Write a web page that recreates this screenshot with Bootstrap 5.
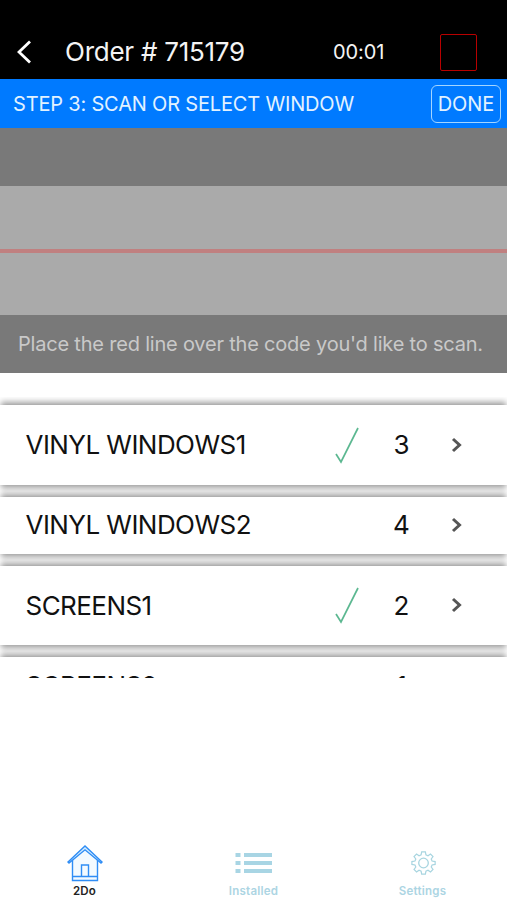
<!DOCTYPE html>
<html lang="en">
<head>
<meta charset="utf-8">
<meta name="viewport" content="width=device-width, initial-scale=1">
<title>Order # 715179</title>
<link href="https://cdn.jsdelivr.net/npm/bootstrap@5.3.0/dist/css/bootstrap.min.css" rel="stylesheet">
<style>
body{font-family:Inter,"Liberation Sans",sans-serif;height:900px;color:#111;background:#fff;line-height:1.2}
.topbar{height:79px;padding:24px 30px 0 17px;background:#000;color:#f4f4f4}
.title{font-size:26px;margin-left:33px;width:268px;letter-spacing:-.25px}
.timer{font-size:20px;width:107px;letter-spacing:-.1px}
.stop{width:37px;height:37px;border:1.5px solid #b80000;border-radius:2px;margin-top:1px}
.step{height:49px;background:#007aff;color:#e2f2ff;font-size:20px;padding:0 6px 0 13px;letter-spacing:-.18px}
.done{height:38px;width:70px;border:1.5px solid #a4d5ff;border-radius:6px;color:#e2f2ff;font-size:20px;letter-spacing:-.1px}
.shade{background:#797979;height:58px}
.view{background:#aaa;height:129px}
.laser{height:4px;background:#c08080}
.hint{font-size:20px;color:#c9c9c9;padding-left:18px;letter-spacing:-.2px}
.rows{margin-top:24px;padding-top:8px;height:281px}
.item{background:#fff;margin-bottom:12px;height:57px;box-shadow:0 4px 6px -1px rgba(0,0,0,.38),0 -4px 6px -1px rgba(0,0,0,.38);padding-left:25.500px;font-size:26px}
.item.tall{height:79.500px}
.name{width:308.500px;letter-spacing:-.55px}
.tick{width:26px;height:38px}
.qty{width:83px;text-align:center}
.item .go{margin-left:8px}
.tabs{height:62px;color:#acd5e3;font-size:11.500px;font-weight:600;letter-spacing:.25px}
.tabs .tab svg{display:block;height:46px;width:40px;margin-bottom:1px}
.tabs .on{color:#222}
</style>
</head>
<body class="d-flex flex-column overflow-hidden">
<header class="topbar d-flex align-items-center flex-shrink-0">
  <svg width="15" height="26" viewBox="0 0 15 26" fill="none" stroke="#fff" stroke-width="2.8"><path d="M13 2.500 2 13l11 10.500"/></svg>
  <div class="title text-nowrap">Order # 715179</div>
  <div class="timer">00:01</div>
  <div class="stop"></div>
</header>
<div class="step d-flex align-items-center justify-content-between flex-shrink-0">
  <span class="text-nowrap">STEP 3: SCAN OR SELECT WINDOW</span>
  <button class="done btn p-0 d-flex align-items-center justify-content-center">DONE</button>
</div>
<section class="flex-shrink-0">
  <div class="shade"></div>
  <div class="view d-flex align-items-center"><div class="laser w-100"></div></div>
  <div class="shade hint d-flex align-items-center text-nowrap"><span>Place the red line over the code you'd like to scan.</span></div>
</section>
<main class="rows overflow-hidden flex-shrink-0">
  <div class="item tall d-flex align-items-center"><div class="name">VINYL WINDOWS1</div><svg class="tick" viewBox="0 0 26 38" fill="none" stroke="#5cb891" stroke-width="1.7"><path d="m2 28 5 8L24 2"/></svg><div class="qty">3</div><svg class="go" width="12" height="16" viewBox="0 0 12 16" fill="none" stroke="#555" stroke-width="3"><path d="m2 2 6.500 6L2 14"/></svg></div>
  <div class="item d-flex align-items-center"><div class="name">VINYL WINDOWS2</div><div class="tick"></div><div class="qty">4</div><svg class="go" width="12" height="16" viewBox="0 0 12 16" fill="none" stroke="#555" stroke-width="3"><path d="m2 2 6.500 6L2 14"/></svg></div>
  <div class="item tall d-flex align-items-center"><div class="name">SCREENS1</div><svg class="tick" viewBox="0 0 26 38" fill="none" stroke="#5cb891" stroke-width="1.7"><path d="m2 28 5 8L24 2"/></svg><div class="qty">2</div><svg class="go" width="12" height="16" viewBox="0 0 12 16" fill="none" stroke="#555" stroke-width="3"><path d="m2 2 6.500 6L2 14"/></svg></div>
  <div class="item d-flex align-items-center"><div class="name">SCREENS2</div><div class="tick"></div><div class="qty">1</div><svg class="go" width="12" height="16" viewBox="0 0 12 16" fill="none" stroke="#555" stroke-width="3"><path d="m2 2 6.500 6L2 14"/></svg></div>
</main>
<nav class="tabs row g-0 mt-auto flex-shrink-0 text-center">
  <div class="tab on col d-flex flex-column align-items-center">
    <svg viewBox="0.500 0 40 46" fill="none" stroke="#2f8df5" stroke-width="1.4"><path d="M8 21.500V42.500h25V21.500L20.500 10.500z" stroke="none" fill="#f3faff"/><path d="M8 21.500V42.500h25V21.500M8 38.500h25M17 38.500V27h7v11.500"/><path d="M4.500 25 3.500 24 20.500 8l17 16-1 1L20.500 11.800z" fill="#d5edff"/></svg>
    <span>2Do</span></div>
  <div class="tab col d-flex flex-column align-items-center">
    <svg viewBox="0.500 0 40 46" fill="#a8d5e4"><path d="M2 15h5v4H2zM10.500 15h28v4h-28zM2 23h5v4H2zM10.500 23h28v4h-28zM2 31h5v4H2zM10.500 31h28v4h-28z"/></svg>
    <span>Installed</span></div>
  <div class="tab col d-flex flex-column align-items-center">
    <svg viewBox="0.500 0 40 46" fill="none" stroke="#a8d5e0" stroke-width="1.3"><circle cx="21" cy="25" r="4.800"/><path transform="translate(8 3.600) scale(.93)" d="M12 11h4l.6 3.300 2.200.9 2.700-1.900 2.700 2.700-1.900 2.700.9 2.200 3.300.6v3l-3.300.6-.9 2.200 1.900 2.700-2.700 2.700-2.700-1.900-2.200.9L16 35h-4l-.6-3.300-2.200-.9-2.700 1.900L3.800 30l1.900-2.700-.9-2.200-3.300-.6v-3l3.300-.6.9-2.200L3.800 16l2.700-2.700 2.700 1.900 2.200-.9z"/></svg>
    <span>Settings</span></div>
</nav>
</body>
</html>
